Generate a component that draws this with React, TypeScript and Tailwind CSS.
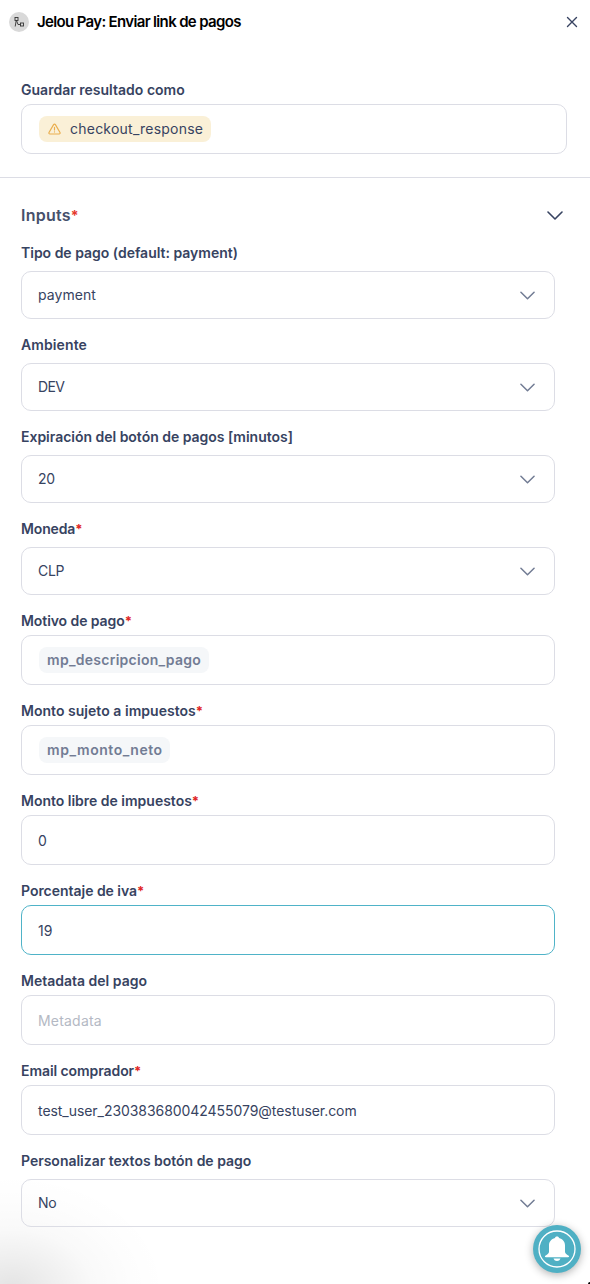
import React from 'react';

const Chevron = ({ className }: { className: string }) => (
  <svg viewBox="0 0 16 9" className={className} fill="none" stroke="currentColor" strokeWidth="1.6" strokeLinecap="round" strokeLinejoin="round">
    <path d="M1 1l7 7 7-7" />
  </svg>
);

interface FieldProps {
  label: string;
  tracking?: string;
  required?: boolean;
  select?: boolean;
  active?: boolean;
  children: React.ReactNode;
}

function Field({ label, tracking = 'tracking-[-0.03px]', required, select, active, children }: FieldProps) {
  return (
    <div className={`flex flex-col ${select ? 'gap-2' : 'gap-1'}`}>
      <label className={`h-5 text-sm leading-5 font-semibold whitespace-nowrap text-[#374361] ${tracking}`}>
        {label}
        {required && <span className="text-[13px] leading-none font-bold text-[#e02424]">*</span>}
      </label>
      <div
        className={`flex items-center justify-between rounded-[10px] border pl-4 pr-[19px] text-sm font-normal text-[#374361] ${
          select ? 'h-12' : 'h-[50px]'
        } ${active ? 'border-[#4fb3c8]' : 'border-[#dcdde5]'}`}
      >
        {children}
        {select && <Chevron className="mt-px h-[9px] w-[15px] text-[#727c94]" />}
      </div>
    </div>
  );
}

const Tag = ({ children, className }: { children: string; className: string }) => (
  <span className={`ml-px flex h-[26px] items-center rounded-lg bg-[#f5f7f9] pr-[7.5px] pl-2 font-semibold text-[#727c94] ${className}`}>
    {children}
  </span>
);

export default function App() {
  return (
    <div className="relative isolate flex h-[1284px] w-full flex-col overflow-hidden bg-white font-[Inter,sans-serif] text-sm">
      <div className="pointer-events-none absolute bottom-0 left-0 -z-10 h-[120px] w-[180px] bg-[radial-gradient(155px_115px_at_12px_125px,rgba(0,0,0,0.11)_0%,rgba(0,0,0,0.065)_25%,rgba(0,0,0,0.025)_52%,rgba(0,0,0,0.008)_78%,transparent_100%)]" />
      <div className="absolute right-0 bottom-0 size-[2px] rounded-tl-full bg-black" />
      <header className="flex h-[44px] items-center justify-between pr-3 pl-[9px]">
        <div className="flex items-center gap-2">
          <span className="flex size-5 items-center justify-center rounded-full bg-[#d9d9d9]">
            <svg viewBox="0 0 12 12" className="size-3" fill="none" stroke="#333333" strokeWidth="0.9">
              <rect x="2" y="1.5" width="3" height="3" />
              <rect x="7.500" y="7" width="3" height="3" />
              <path d="M3.200 4.500L2.200 10.500M3.500 4.500L5 8.500H7.500" />
            </svg>
          </span>
          <h1 className="text-[15px] leading-5 font-semibold tracking-[-0.66px] whitespace-nowrap text-black">
            Jelou Pay: Enviar link de pagos
          </h1>
        </div>
        <svg viewBox="0 0 12 12" className="size-3" fill="none" stroke="#374361" strokeWidth="1.4" strokeLinecap="round">
          <path d="M1.5 1.5l9 9M10.5 1.5l-9 9" />
        </svg>
      </header>

      <section className="border-b border-[#dcdde5] pt-9 pr-[23px] pb-[23px] pl-[21px]">
        <Field label="Guardar resultado como" tracking="tracking-[0.01px]">
          <span className="ml-px flex h-[26px] items-center gap-2 rounded-lg bg-[#faf0d7] px-2 font-normal tracking-[0.23px]">
            <svg viewBox="0 0 15 14" className="h-[14px] w-[15px]" fill="none" stroke="#eaae4e" strokeWidth="1.2" strokeLinecap="round" strokeLinejoin="round">
              <path d="M6.600 2.600L2 10.500a1 1 0 0 0 .9 1.500h9.200a1 1 0 0 0 .9-1.500L8.400 2.600a1.050 1.050 0 0 0-1.800 0zM7.500 5.400v2.600M7.500 9.800v.2" />
            </svg>
            checkout_response
          </span>
        </Field>
      </section>

      <section className="flex flex-col pt-[25px] pr-[35px] pl-[21px]">
        <div className="mb-4 -mr-2 flex h-6 items-center justify-between">
          <h2 className="text-base font-semibold tracking-[0.25px] text-[#46506b]">
            Inputs<span className="text-[14px] leading-none font-bold text-[#e5392d]">*</span>
          </h2>
          <Chevron className="h-[9px] w-4 text-[#374361]" />
        </div>
        <div className="flex flex-col gap-4">
          <Field label="Tipo de pago (default: payment)" tracking="tracking-[-0.01px]" select>
            <span className="tracking-[0.05px]">payment</span>
          </Field>
          <Field label="Ambiente" tracking="tracking-[0.1px]" select>
            <span className="tracking-[-0.6px]">DEV</span>
          </Field>
          <Field label="Expiración del botón de pagos [minutos]" tracking="tracking-[-0.02px]" select>
            <span className="tracking-[-0.2px]">20</span>
          </Field>
          <Field label="Moneda" tracking="tracking-[-0.15px]" required select>
            <span className="tracking-[-0.3px]">CLP</span>
          </Field>
          <Field label="Motivo de pago" tracking="tracking-[-0.08px]" required>
            <Tag className="tracking-[0.27px]">mp_descripcion_pago</Tag>
          </Field>
          <Field label="Monto sujeto a impuestos" tracking="tracking-[0.03px]" required>
            <Tag className="tracking-[0.54px]">mp_monto_neto</Tag>
          </Field>
          <Field label="Monto libre de impuestos" tracking="tracking-[-0.01px]" required>
            <span className="pt-[2px]">0</span>
          </Field>
          <Field label="Porcentaje de iva" tracking="tracking-[-0.03px]" required active>
            <span className="pt-[2px]">19</span>
          </Field>
          <Field label="Metadata del pago" tracking="tracking-[0px]">
            <span className="pt-[2px] tracking-[0.2px] text-[#b4b9c4]">Metadata</span>
          </Field>
          <Field label="Email comprador" tracking="tracking-[-0.08px]" required>
            <span className="pt-[2px] tracking-[-0.055px]">test_user_230383680042455079@testuser.com</span>
          </Field>
          <Field label="Personalizar textos botón de pago" tracking="tracking-[-0.02px]" select>
            <span className="tracking-[-0.3px]">No</span>
          </Field>
        </div>
      </section>

      <button
        aria-label="Notificaciones"
        className="absolute top-[1225px] left-[533px] flex size-12 items-center justify-center rounded-full bg-[#4fb0c4] shadow-[0_2px_8px_rgba(0,0,0,0.3)]"
      >
        <svg viewBox="0 0 48 48" className="size-12">
          <circle cx="24" cy="24" r="18" fill="none" stroke="white" strokeWidth="1.3" />
          <path fill="white" d="M24 11.500c-1.300 0-2 .7-2 1.500-3.700.9-6 3.700-6 7.500v6.300c0 1.600-1.300 2.400-3.700 4-.7.600-.4 1.500.6 1.500h22.200c1 0 1.300-.9.6-1.500-2.400-1.600-3.700-2.400-3.700-4v-6.300c0-3.800-2.300-6.600-6-7.500 0-.8-.7-1.500-2-1.500zM20.500 33.500h7c-.6 1.700-1.900 2.500-3.500 2.500s-2.900-.8-3.500-2.500z" />
        </svg>
      </button>
    </div>
  );
}
